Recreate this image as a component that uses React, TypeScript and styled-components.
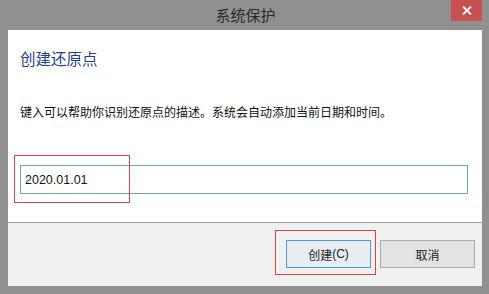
import React from 'react';
import styled, { createGlobalStyle } from 'styled-components';

const GlobalStyle = createGlobalStyle`
  html, body {
    margin: 0;
    padding: 0;
    background: #909090;
  }
  body {
    font-family: "Noto Sans CJK SC", "Liberation Sans", sans-serif;
  }
`;

const Window = styled.div`
  width: 489px;
  height: 294px;
  background: #909090;
  display: flex;
  flex-direction: column;
  box-sizing: border-box;
  padding: 0 7px 8px 8px;
`;

const TitleBar = styled.div`
  height: 30px;
  flex-shrink: 0;
  position: relative;
  display: flex;
  align-items: center;
  justify-content: center;
`;

const Title = styled.div`
  font-size: 15px;
  color: #2b2b2b;
  line-height: 30px;
  margin-left: 1px;
`;

const CloseButton = styled.div`
  position: absolute;
  top: 0;
  right: 0;
  width: 31px;
  height: 21px;
  background: #c75050;
  display: flex;
  align-items: center;
  justify-content: center;
`;

const Body = styled.div`
  flex: 1;
  display: flex;
  flex-direction: column;
  background: #ffffff;
`;

const Content = styled.div`
  position: relative;
  height: 192px;
  box-sizing: border-box;
  padding: 18px 0 0 12px;
  display: flex;
  flex-direction: column;
`;

const Heading = styled.div`
  font-size: 15.5px;
  line-height: 20px;
  color: #1f3f8f;
`;

const Description = styled.div`
  margin-top: 36px;
  font-size: 12px;
  line-height: 16px;
  color: #111;
`;

const Input = styled.div`
  margin-top: 45px;
  width: 448px;
  height: 29px;
  box-sizing: border-box;
  border: 1px solid #76a0ac;
  display: flex;
  align-items: center;
  padding-left: 4px;
  font-family: "Liberation Sans", Arial, sans-serif;
  font-size: 12.5px;
  color: #111;
`;

const Annotation = styled.div<{ $x: number; $y: number; $w: number; $h: number }>`
  position: absolute;
  left: ${p => p.$x}px;
  top: ${p => p.$y}px;
  width: ${p => p.$w}px;
  height: ${p => p.$h}px;
  box-sizing: border-box;
  border: 1px solid #d04545;
  pointer-events: none;
`;

const Footer = styled.div`
  position: relative;
  flex: 1;
  background: #f0f0f0;
  border-top: 1px solid #a0a0a0;
  display: flex;
  justify-content: flex-end;
  align-items: flex-start;
  gap: 9px;
  padding: 17px 7px 0 0;
`;

const Button = styled.div<{ $primary?: boolean }>`
  width: ${p => (p.$primary ? 85 : 95)}px;
  height: 28px;
  box-sizing: border-box;
  border: 1px solid ${p => (p.$primary ? '#4f98d6' : '#adadad')};
  background: ${p => (p.$primary ? '#e8edf1' : '#e3e3e3')};
  display: flex;
  align-items: center;
  justify-content: center;
  font-size: 12px;
  color: #222;
  span {
    font-family: "Liberation Sans", Arial, sans-serif;
  }
`;

export default function App() {
  return (
    <>
      <GlobalStyle />
      <Window>
        <TitleBar>
          <Title>系统保护</Title>
          <CloseButton>
            <svg width="10" height="9" viewBox="0 0 10 9">
              <path d="M1 0.5 L9 8.5 M9 0.5 L1 8.5" stroke="#fff" strokeWidth="1.8" />
            </svg>
          </CloseButton>
        </TitleBar>
        <Body>
          <Content>
            <Heading>创建还原点</Heading>
            <Description>键入可以帮助你识别还原点的描述。系统会自动添加当前日期和时间。</Description>
            <Input>2020.01.01</Input>
            <Annotation $x={6} $y={125} $w={116} $h={48} />
          </Content>
          <Footer>
            <Button $primary>
              创建<span>(C)</span>
            </Button>
            <Button>取消</Button>
            <Annotation $x={267} $y={7} $w={101} $h={45} />
          </Footer>
        </Body>
      </Window>
    </>
  );
}
